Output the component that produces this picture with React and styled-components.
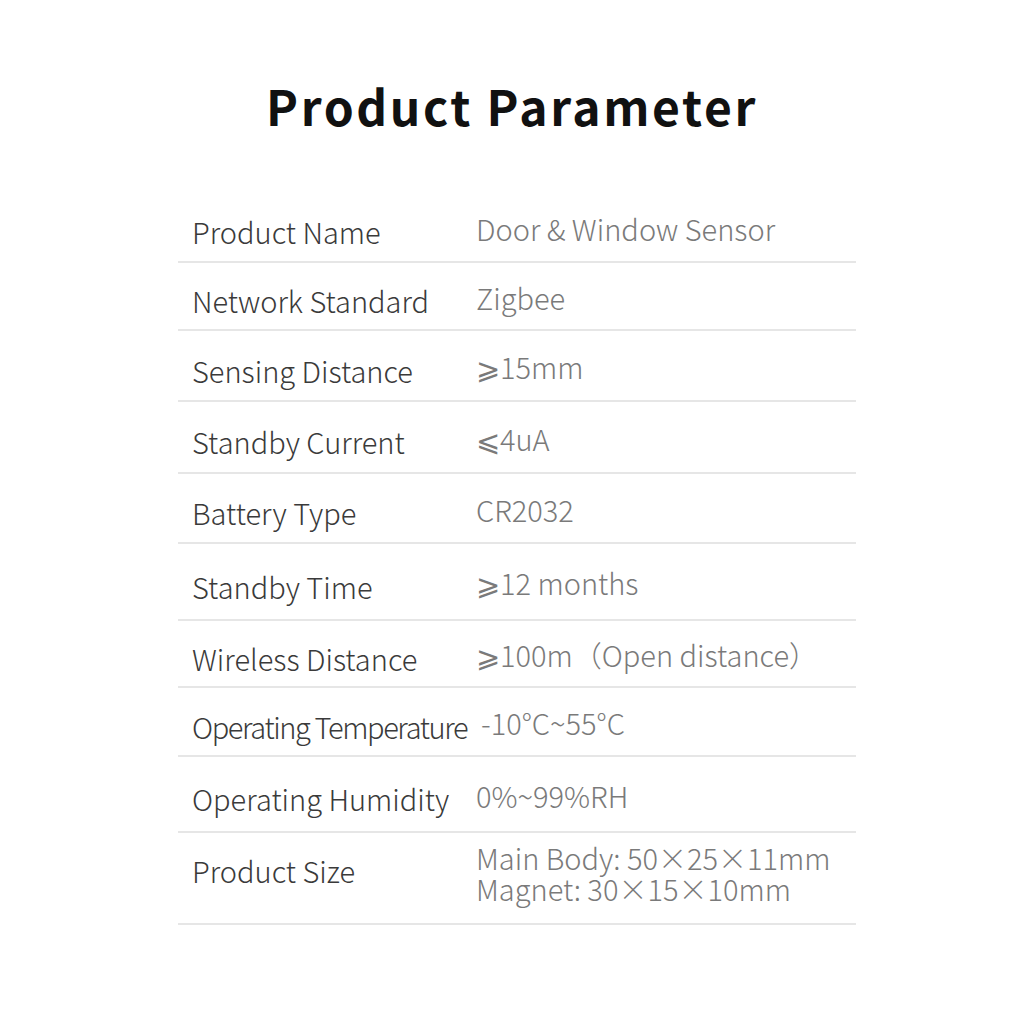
import styled, { createGlobalStyle } from "styled-components"

const Global = createGlobalStyle`
    body {
        margin: 0;
        background: #fff;
        font-family: "Noto Sans CJK SC", "Noto Sans", sans-serif;
    }
`

const Page = styled.div`
    width: 1024px;
    height: 1024px;
    display: flex;
    flex-direction: column;
    align-items: center;
    padding-top: 70px;
    box-sizing: border-box;
`

const Title = styled.h1`
    margin: 0;
    font-size: 48px;
    line-height: 70px;
    font-weight: 700;
    letter-spacing: 2.6px;
    color: #111;
`

const Table = styled.div`
    width: 678px;
    margin-top: 53px;
    margin-left: 10px;
    display: flex;
    flex-direction: column;
`

const Row = styled.div`
    display: grid;
    grid-template-columns: 298px 1fr;
    align-items: center;
    height: ${p => p.$h}px;
    border-bottom: 2px solid #e6e6e6;
    box-sizing: border-box;
`

const Label = styled.div`
    padding-left: 14px;
    margin-top: ${p => p.$top ?? 8}px;
    font-size: 29px;
    font-weight: 300;
    color: #3a3a3a;
    white-space: nowrap;
    letter-spacing: ${p => p.$tight ? "-1.4px" : "0"};
`

const Value = styled.div`
    font-size: 29px;
    font-weight: 300;
    line-height: 31px;
    color: #7a7a7a;
    white-space: pre-line;
    margin-top: 2px;
    margin-left: ${p => p.$shift || 0}px;
    margin-bottom: ${p => p.$lift || 0}px;
`

const rows = [
    { label: "Product Name", value: "Door & Window Sensor", h: 70 },
    { label: "Network Standard", value: "Zigbee", h: 68 },
    { label: "Sensing Distance", value: "⩾15mm", h: 71 },
    { label: "Standby Current", value: "⩽4uA", h: 72 },
    { label: "Battery Type", value: "CR2032", h: 70 },
    { label: "Standby Time", value: "⩾12 months", h: 77 },
    { label: "Wireless Distance", value: "⩾100m（Open distance）", h: 67 },
    { label: "Operating Temperature", value: "-10°C~55°C", h: 69, tight: true, shift: 5 },
    { label: "Operating Humidity", value: "0%~99%RH", h: 76 },
    { label: "Product Size", value: "Main Body: 50×25×11mm\nMagnet: 30×15×10mm", h: 92, top: -16, lift: 12 },
]

const App = () => {
    return (
        <Page>
            <Global />
            <Title>Product Parameter</Title>
            <Table>
                {rows.map(r => (
                    <Row key={r.label} $h={r.h}>
                        <Label $tight={r.tight} $top={r.top}>{r.label}</Label>
                        <Value $shift={r.shift} $lift={r.lift}>{r.value}</Value>
                    </Row>
                ))}
            </Table>
        </Page>
    )
}

export default App
